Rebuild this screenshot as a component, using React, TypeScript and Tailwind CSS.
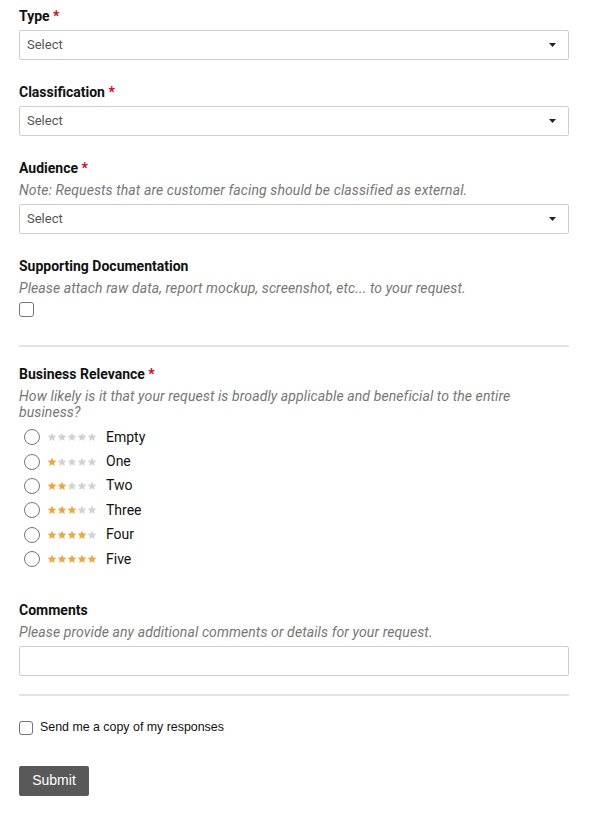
import { ReactNode } from "react";

const roboto = "font-['Roboto',sans-serif]";

function Label({ text, required }: { text: string; required?: boolean }) {
  return (
    <div className="text-[14px] leading-4 font-bold text-[#111]">
      {text}
      {required && <span className="text-[#d0021b]"> *</span>}
    </div>
  );
}

function Note({ children }: { children: ReactNode }) {
  return (
    <div className="mt-1.5 text-[14px] leading-4 tracking-[0.1px] italic text-[#767676]">
      {children}
    </div>
  );
}

function Select() {
  return (
    <div className="flex h-[30px] items-center justify-between rounded-[2px] border border-[#cfcfcf] bg-white pr-[12px] pl-[7px]">
      <span className="text-[13px] text-[#555]">Select</span>
      <svg width="7" height="4" viewBox="0 0 7 4">
        <path d="M0 0h7L3.5 4z" fill="#222" />
      </svg>
    </div>
  );
}

function Star({ on }: { on: boolean }) {
  return (
    <svg width="10" height="10" viewBox="0 0 24 24">
      <path
        d="M12 1.5l3.1 6.9 7.4.7-5.6 5 1.7 7.4L12 17.6l-6.6 3.9 1.7-7.4-5.6-5 7.4-.7z"
        fill={on ? "#f0a63b" : "#d2d2d2"}
      />
    </svg>
  );
}

const ratings = ["Empty", "One", "Two", "Three", "Four", "Five"];

export default function App() {
  return (
    <div className={`${roboto} bg-white px-[19px] pt-[8px] pb-[21px] w-[588px]`}>
      <Label text="Type" required />
      <div className="mt-[6px]">
        <Select />
      </div>

      <div className="mt-[24px]">
        <Label text="Classification" required />
      </div>
      <div className="mt-[6px]">
        <Select />
      </div>

      <div className="mt-[24px]">
        <Label text="Audience" required />
      </div>
      <Note>Note: Requests that are customer facing should be classified as external.</Note>
      <div className="mt-1.5">
        <Select />
      </div>

      <div className="mt-6">
        <Label text="Supporting Documentation" />
      </div>
      <Note>Please attach raw data, report mockup, screenshot, etc... to your request.</Note>
      <div className="mt-1.5 h-[15px] w-[15px] rounded-[3px] border border-[#767676] bg-white" />

      <div className="mt-7 h-[2px] bg-[#e3e3e3]" />

      <div className="mt-[19px]">
        <Label text="Business Relevance" required />
      </div>
      <Note>
        How likely is it that your request is broadly applicable and beneficial to the entire
        business?
      </Note>
      <div className="mt-[5px] flex flex-col">
        {ratings.map((r, i) => (
          <div key={r} className="flex h-[24.4px] items-center">
            <div className="ml-[5px] h-4 w-4 rounded-full border border-[#767676] bg-white" />
            <div className="ml-[7px] flex">
              {[0, 1, 2, 3, 4].map((s) => (
                <Star key={s} on={s < i} />
              ))}
            </div>
            <span className="ml-[9px] text-[14px] text-[#111]">{r}</span>
          </div>
        ))}
      </div>

      <div className="mt-[31px]">
        <Label text="Comments" />
      </div>
      <Note>Please provide any additional comments or details for your request.</Note>
      <div className="mt-1.5 h-[30px] rounded-[2px] border border-[#cfcfcf] bg-white" />

      <div className="mt-[18px] h-[2px] bg-[#e3e3e3]" />

      <div className="mt-[22px] flex items-center font-['Liberation_Sans',Arial,sans-serif]">
        <div className="h-[14px] w-[14px] rounded-[3px] border border-[#767676] bg-white" />
        <span className="ml-[7px] text-[12.4px] text-[#111]">Send me a copy of my responses</span>
      </div>

      <button className="mt-[29px] h-[30px] w-[70px] rounded-[2px] bg-[#595959] font-['Liberation_Sans',Arial,sans-serif] text-[14px] text-white">
        Submit
      </button>
    </div>
  );
}
